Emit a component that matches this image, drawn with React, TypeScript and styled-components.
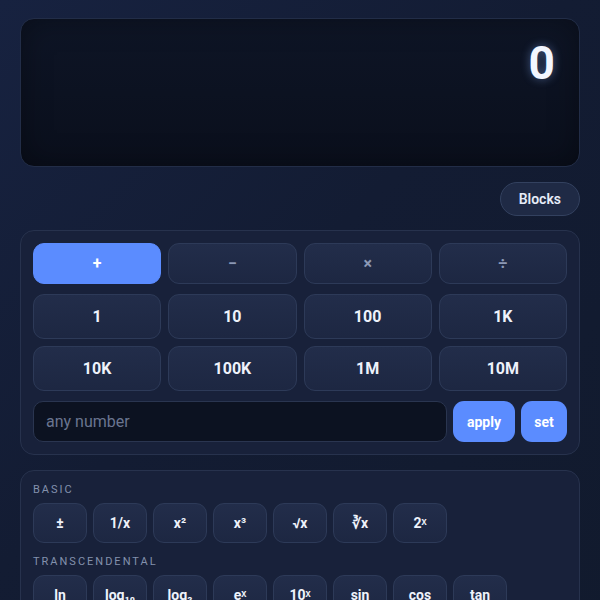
import React from "react";
import styled, { createGlobalStyle, css } from "styled-components";

const GlobalStyle = createGlobalStyle`
  * { box-sizing: border-box; }
  html, body {
    margin: 0;
    padding: 0;
    min-height: 100%;
    background: linear-gradient(135deg, #172240 0%, #131c33 45%, #111a2d 100%);
    font-family: Roboto, "Liberation Sans", sans-serif;
    color: #e8eefb;
  }
`;

const Page = styled.div`
  min-height: 600px;
  padding: 18px 20px 20px 20px;
  display: flex;
  flex-direction: column;
`;

const Display = styled.div`
  height: 149px;
  border: 1px solid #222d47;
  border-radius: 14px;
  background: linear-gradient(180deg, #0e1526 0%, #0a0f1c 100%);
  box-shadow: inset 0 0 30px rgba(0, 0, 0, 0.35);
  display: flex;
  justify-content: flex-end;
  align-items: flex-start;
  padding: 17px 24px 0 0;
`;

const Readout = styled.div`
  font-size: 46px;
  font-weight: 700;
  line-height: 54px;
  color: #f2f6ff;
  text-shadow: 0 0 10px rgba(140, 180, 255, 0.45);
`;

const ToolRow = styled.div`
  display: flex;
  justify-content: flex-end;
  margin: 15px 0 14px;
`;

const PillButton = styled.button`
  height: 34px;
  padding: 0 18px;
  border-radius: 17px;
  border: 1px solid #33415f;
  background: #1f2a45;
  color: #e6ecf8;
  font-family: inherit;
  font-size: 14px;
  font-weight: 600;
`;

const Panel = styled.div`
  border: 1px solid #27324d;
  border-radius: 14px;
  background: #18213a;
  padding: 12px;
`;

const Grid = styled.div<{ $rowH: number }>`
  display: grid;
  grid-template-columns: repeat(4, 1fr);
  grid-auto-rows: ${(p) => p.$rowH}px;
  gap: 7px;
`;

const keyBase = css`
  border-radius: 11px;
  font-family: inherit;
  font-weight: 700;
  display: flex;
  align-items: center;
  justify-content: center;
`;

const Key = styled.button<{ $active?: boolean; $muted?: boolean }>`
  ${keyBase}
  font-size: 16px;
  border: 1px solid ${(p) => (p.$active ? "#5b8cff" : "#2d3a58")};
  background: ${(p) =>
    p.$active ? "#5b8cff" : "linear-gradient(180deg, #222d4a 0%, #1d2742 100%)"};
  color: ${(p) => (p.$active ? "#ffffff" : p.$muted ? "#8c99b6" : "#eef2fb")};
`;

const OpGrid = styled(Grid)`
  margin-bottom: 10px;
`;

const InputRow = styled.div`
  display: flex;
  gap: 6px;
  margin-top: 10px;
  height: 41px;
`;

const NumberInput = styled.input`
  flex: 1;
  min-width: 0;
  border-radius: 10px;
  border: 1px solid #2a3550;
  background: #0c1221;
  color: #e8eefb;
  font-family: inherit;
  font-size: 16px;
  padding: 0 12px;
  &::placeholder {
    color: #6a7590;
  }
`;

const AccentButton = styled.button<{ $w: number }>`
  ${keyBase}
  width: ${(p) => p.$w}px;
  border: none;
  background: #5b8cff;
  color: #ffffff;
  font-size: 14px;
`;

const FnPanel = styled(Panel)`
  margin-top: 15px;
  padding-top: 12px;
`;

const SectionLabel = styled.div`
  font-size: 11px;
  letter-spacing: 2px;
  color: #8391ad;
  text-transform: uppercase;
  line-height: 13px;
  margin-bottom: 7px;
`;

const FnRow = styled.div`
  display: flex;
  gap: 6px;
  margin-bottom: 12px;
`;

const FnKey = styled.button`
  ${keyBase}
  width: 54px;
  height: 40px;
  font-size: 14px;
  border: 1px solid #2d3a58;
  background: linear-gradient(180deg, #222d4a 0%, #1d2742 100%);
  color: #eef2fb;
`;

const ops = ["+", "−", "×", "÷"];
const amounts = ["1", "10", "100", "1K", "10K", "100K", "1M", "10M"];
const basic = ["±", "1/x", "x²", "x³", "√x", "∛x", "2ˣ"];
const transcendental = ["ln", "log₁₀", "log₂", "eˣ", "10ˣ", "sin", "cos", "tan"];

export default function App() {
  return (
    <>
      <GlobalStyle />
      <Page>
        <Display>
          <Readout>0</Readout>
        </Display>
        <ToolRow>
          <PillButton>Blocks</PillButton>
        </ToolRow>
        <Panel>
          <OpGrid $rowH={41}>
            {ops.map((op, i) => (
              <Key key={op} $active={i === 0} $muted={i > 0}>
                {op}
              </Key>
            ))}
          </OpGrid>
          <Grid $rowH={45}>
            {amounts.map((a) => (
              <Key key={a}>{a}</Key>
            ))}
          </Grid>
          <InputRow>
            <NumberInput placeholder="any number" />
            <AccentButton $w={62}>apply</AccentButton>
            <AccentButton $w={46}>set</AccentButton>
          </InputRow>
        </Panel>
        <FnPanel>
          <SectionLabel>Basic</SectionLabel>
          <FnRow>
            {basic.map((b) => (
              <FnKey key={b}>{b}</FnKey>
            ))}
          </FnRow>
          <SectionLabel>Transcendental</SectionLabel>
          <FnRow>
            {transcendental.map((t) => (
              <FnKey key={t}>{t}</FnKey>
            ))}
          </FnRow>
        </FnPanel>
      </Page>
    </>
  );
}
